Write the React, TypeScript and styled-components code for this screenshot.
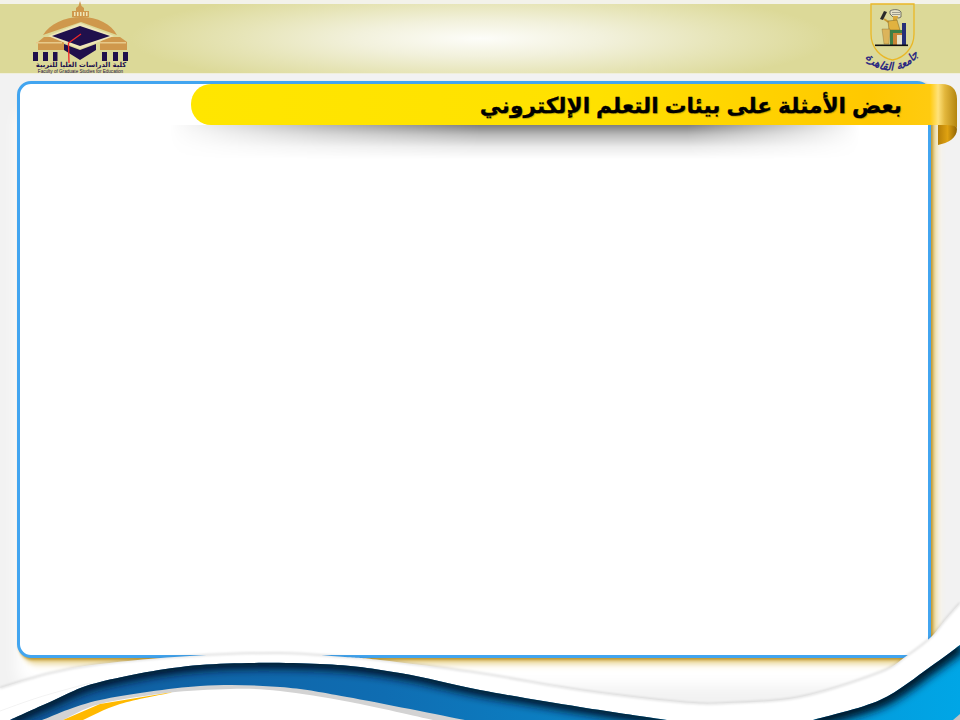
// App.tsx
import React from "react";
import styled, { createGlobalStyle } from "styled-components";

const GlobalStyle = createGlobalStyle`
  html, body {
    margin: 0;
    padding: 0;
    background: #f2f2f2;
  }
`;

const Page = styled.div`
  position: relative;
  width: 960px;
  height: 720px;
  overflow: hidden;
  background: #f2f2f2;
  font-family: "Liberation Sans", "DejaVu Sans", sans-serif;
`;

const Header = styled.header`
  box-sizing: border-box;
  height: 74px;
  padding: 0 40px 0 33px;
  display: flex;
  justify-content: space-between;
  align-items: flex-start;
  border-top: 4px solid #f3f2ea;
  border-bottom: 1px solid #f0efdc;
  background: radial-gradient(
    ellipse 350px 52px at 50% 50%,
    #fdfdf9 0%,
    #f2f1dc 35%,
    #e6e4b6 70%,
    #dcd998 100%
  );
`;

const CollegeLogo = styled.svg`
  display: block;
  width: 96px;
  height: 74px;
  margin-top: -4px;
`;

const UniversityLogo = styled.svg`
  display: block;
  width: 60px;
  height: 76px;
  margin-top: -4px;
  overflow: visible;
`;

const Main = styled.main`
  padding: 7px 0 0 17px;
`;

const Card = styled.section`
  box-sizing: border-box;
  width: 914px;
  height: 577px;
  background: #fff;
  border: 3px solid #42a5f0;
  border-radius: 14px;
  box-shadow: 2px 2px 3px 0 #bd9630, 5px 5px 5px 0 #e9d594, 8px 8px 7px 0 #f8f0d8,
    0 28px 16px 0 #fff;
`;

const TitleBar = styled.div`
  position: relative;
  box-sizing: border-box;
  width: 739px;
  height: 41px;
  margin-left: 171px;
  padding: 3px 28px 0 0;
  display: flex;
  align-items: center;
  justify-content: flex-start;
  direction: rtl;
  border-radius: 20px 0 0 20px;
  background: linear-gradient(
    90deg,
    #ffe600 0%,
    #ffe100 55%,
    #ffc800 92%,
    #ffcb10 100%
  );

  &::after {
    content: "";
    position: absolute;
    left: -22px;
    right: 70px;
    top: 100%;
    height: 34px;
    background: linear-gradient(
      180deg,
      rgba(0, 0, 0, 0.5) 0%,
      rgba(0, 0, 0, 0.26) 30%,
      rgba(0, 0, 0, 0.08) 65%,
      rgba(0, 0, 0, 0) 100%
    );
    mask-image: linear-gradient(
      90deg,
      transparent 0%,
      rgba(0, 0, 0, 0.55) 22%,
      #000 45%,
      #000 75%,
      transparent 100%
    );
  }
`;

const Title = styled.h1`
  margin: 0;
  font-family: "Liberation Sans", "DejaVu Sans", sans-serif;
  font-size: 21.7px;
  font-weight: 700;
  color: #000;
  white-space: nowrap;
  -webkit-text-stroke: 0.3px #000;
  text-shadow: 1px 1px 1px rgba(90, 70, 0, 0.35);
`;

const Ribbon = styled.svg`
  position: absolute;
  left: 100%;
  top: -1px;
  width: 28px;
  height: 63px;
  z-index: 1;
`;

const Wave = styled.svg`
  position: absolute;
  left: 0;
  bottom: 0;
  display: block;
  width: 960px;
  height: 130px;
`;

type Point = [number, number];

// catmull-rom through the points, so the curves can be read off the picture
const smooth = (pts: Point[]) => {
  let d = `M${pts[0][0]} ${pts[0][1]}`;
  for (let i = 0; i < pts.length - 1; i++) {
    const p0 = pts[i - 1] || pts[i];
    const p1 = pts[i];
    const p2 = pts[i + 1];
    const p3 = pts[i + 2] || p2;
    const c1x = p1[0] + (p2[0] - p0[0]) / 6;
    const c1y = p1[1] + (p2[1] - p0[1]) / 6;
    const c2x = p2[0] - (p3[0] - p1[0]) / 6;
    const c2y = p2[1] - (p3[1] - p1[1]) / 6;
    d += ` C${c1x} ${c1y} ${c2x} ${c2y} ${p2[0]} ${p2[1]}`;
  }
  return d;
};

const bandTop: Point[] = [
  [0, 688], [50, 673], [100, 664], [190, 656], [280, 653], [345, 657],
  [380, 660], [480, 673], [580, 690], [680, 702], [727, 703], [800, 697],
  [880, 672], [905, 657], [930, 638], [945, 620], [960, 603],
];
const blueLeft: Point[] = [
  [10, 720], [50, 702], [100, 682], [200, 665], [320, 664], [400, 673],
  [480, 690], [580, 707], [667, 720],
];
const blueRight: Point[] = [
  [813, 720], [880, 700], [930, 667], [960, 645],
];
const blueBottom: Point[] = [
  [42, 720], [100, 700], [200, 686], [280, 687], [347, 697], [465, 720],
];
const greyBottom: Point[] = [
  [63, 720], [100, 704], [167, 693], [230, 689], [280, 691], [350, 702],
  [433, 720],
];
const goldBottom: Point[] = [
  [83, 720], [120, 704], [172, 692.5],
];

const BottomWave = () => (
  <Wave viewBox="0 590 960 130" aria-hidden="true">
    <defs>
      <linearGradient id="blueFill" x1="0" y1="0" x2="960" y2="0" gradientUnits="userSpaceOnUse">
        <stop offset="0" stopColor="#0f5a9c" />
        <stop offset="0.4" stopColor="#0f6db2" />
        <stop offset="0.65" stopColor="#0a86c9" />
        <stop offset="1" stopColor="#00a6e6" />
      </linearGradient>
      <clipPath id="blueClip">
        <path d={`${smooth(blueLeft)} Z ${smooth(blueRight)} L960 720 Z`} />
      </clipPath>
      <filter id="edgeBlur" x="-5%" y="-50%" width="110%" height="200%">
        <feGaussianBlur stdDeviation="4" />
      </filter>
      <filter id="lineBlur" x="-5%" y="-50%" width="110%" height="200%">
        <feGaussianBlur stdDeviation="1" />
      </filter>
    </defs>
    <path d={`${smooth(bandTop)} L960 720 L0 720 Z`} fill="#fff" />
    <path d={smooth(bandTop)} fill="none" stroke="#000" strokeOpacity="0.12" strokeWidth="2" filter="url(#lineBlur)" />
    <path d={smooth([[0, 711], [40, 697], [90, 683]])} fill="none" stroke="#000" strokeOpacity="0.05" strokeWidth="1" />
    <g clipPath="url(#blueClip)">
      <rect x="0" y="590" width="960" height="130" fill="url(#blueFill)" />
      <path d={smooth(blueLeft)} fill="none" stroke="#03152a" strokeWidth="12" filter="url(#edgeBlur)" />
      <path d={smooth(blueRight)} fill="none" stroke="#03152a" strokeWidth="16" filter="url(#edgeBlur)" />
    </g>
    <path d={`${smooth(blueBottom)} Z`} fill="#d3d3d3" />
    <path d={`${smooth(greyBottom)} Z`} fill="#fff" />
    <path d={`${smooth(goldBottom)} L167 693 L100 704 L63 720 Z`} fill="#ffb900" />
    <path d="M953 720 L960 714 V720 Z" fill="#c4c4c4" />
  </Wave>
);

const FoldRibbon = () => (
  <Ribbon viewBox="0 0 28 63" aria-hidden="true">
    <defs>
      <linearGradient id="ribbonFront" x1="0" x2="1" y1="0" y2="0">
        <stop offset="0" stopColor="#ffcb10" />
        <stop offset="0.3" stopColor="#ffe27a" />
        <stop offset="0.55" stopColor="#e3b73c" />
        <stop offset="1" stopColor="#b3850f" />
      </linearGradient>
      <linearGradient id="ribbonFold" x1="0" x2="1" y1="0" y2="0">
        <stop offset="0" stopColor="#b67f08" />
        <stop offset="0.5" stopColor="#dfa211" />
        <stop offset="1" stopColor="#8f6405" />
      </linearGradient>
    </defs>
    <path d="M8 40 V62 C18 60 27 55 27 46 C27 41 18 40 8 40 Z" fill="url(#ribbonFold)" />
    <path d="M0 1 H12 C21 1 27 6 27 16 V46 C27 42 20 42 8 42 H0 Z" fill="url(#ribbonFront)" />
  </Ribbon>
);

const CollegeMark = () => (
  <CollegeLogo viewBox="33 0 96 74" role="img">
    <path d="M80 1 L81.5 6 L84 8 V11 H76 V8 L78.5 6 Z" fill="#cf984c" />
    <rect x="72" y="11" width="17" height="6" fill="#cf984c" />
    <path d="M74 12 h1.5 v4 h-1.5 z M77 12 h1.5 v4 h-1.5 z M80 12 h1.5 v4 h-1.5 z M83 12 h1.5 v4 h-1.5 z M86 12 h1.5 v4 h-1.5 z" fill="#efe6b8" />
    <path d="M43 35 C50 24 64 17 81 17 C98 17 111 24 117 35 L81 22 Z" fill="#cf984c" />
    <path d="M38 42 L44 37 H60 L64 42 V50 H38 Z" fill="#cf984c" />
    <path d="M100 42 L106 37 H120 L127 42 V50 H100 Z" fill="#cf984c" />
    <path d="M36 42 H62 V43.500 H36 Z M100 42 H126 V43.500 H100 Z" fill="#e7c98a" />
    <path d="M48 36 L80 23 L114 36 L80 49 Z" fill="#efe6b8" />
    <path d="M52 36 L80 26 L110 36 L80 46 Z" fill="#20104c" />
    <path d="M64 44 L80 50 L96 44 V50 L80 60 L64 50 Z" fill="#20104c" />
    <path d="M81 34 L68.5 43 L69 63" fill="none" stroke="#f02a2a" strokeWidth="1.3" />
    <path d="M33 52 h5 v9 h-5 z M43 52 h5 v9 h-5 z M53 52 h4.500 v9 h-4.500 z M102 52 h5 v9 h-5 z M113 52 h5 v9 h-5 z M123 52 h5 v9 h-5 z" fill="#20104c" />
    <text x="81" y="66.500" textAnchor="middle" direction="rtl" fontFamily="'DejaVu Sans', sans-serif" fontWeight="700" fontSize="6.800" fill="#20104c">
      كلية الدراسات العليا للتربية
    </text>
    <text x="80.500" y="72.800" textAnchor="middle" fontFamily="'Liberation Sans', sans-serif" fontSize="4.600" fill="#20104c">
      Faculty of Graduate Studies for Education
    </text>
  </CollegeLogo>
);

const UniversityMark = () => (
  <UniversityLogo viewBox="860 0 60 76" role="img">
    <defs>
      <path id="sealArc" d="M866 58 C876 74 905 76 918 55" />
    </defs>
    <path d="M871 4 H914 V34 C914 48 904 58 892.500 60 C881 58 871 48 871 34 Z" fill="none" stroke="#eab726" strokeWidth="1.300" />
    <path d="M880 19 L884 11 L887 12 L883 20 Z" fill="#2a2a2a" />
    <path d="M884 19 L890 23" stroke="#c79a35" strokeWidth="2" />
    <path d="M890 11 C893 9 899 9 901 12 L901 17 L899 18 L893 17 L890 14 Z" fill="#e7e3c8" stroke="#444" strokeWidth="0.700" />
    <path d="M892 12.500 H900 M892 14.500 H900" stroke="#555" strokeWidth="0.500" />
    <path d="M893 16 L898 16 L897 21 L893 22 Z" fill="#d9a93a" />
    <path d="M888 21 L897 20 L900 30 L889 30 Z" fill="#e1b23f" stroke="#5b4a18" strokeWidth="0.400" />
    <rect x="902" y="23" width="4" height="22" fill="#262f78" />
    <rect x="890" y="30" width="12" height="15" fill="#3f7f45" />
    <rect x="893" y="33" width="9" height="12" fill="#c98436" />
    <rect x="897" y="35" width="5" height="10" fill="#e7e3c8" />
    <path d="M882 29 H890 L889 44 H884 Z" fill="#dcb45a" stroke="#6a5520" strokeWidth="0.300" />
    <rect x="875" y="44.500" width="33" height="1.600" fill="#111" />
    <text fontFamily="'DejaVu Sans', sans-serif" fontSize="11" fontWeight="700" fontStyle="italic" fill="#2e2b82" direction="rtl" textAnchor="middle">
      <textPath href="#sealArc" startOffset="50%">جامعة القاهرة</textPath>
    </text>
  </UniversityLogo>
);

export default function App() {
  return (
    <Page>
      <GlobalStyle />
      <Header>
        <CollegeMark />
        <UniversityMark />
      </Header>
      <Main>
        <Card>
          <TitleBar>
            <Title>بعض الأمثلة على بيئات التعلم الإلكتروني</Title>
            <FoldRibbon />
          </TitleBar>
        </Card>
      </Main>
      <BottomWave />
    </Page>
  );
}
